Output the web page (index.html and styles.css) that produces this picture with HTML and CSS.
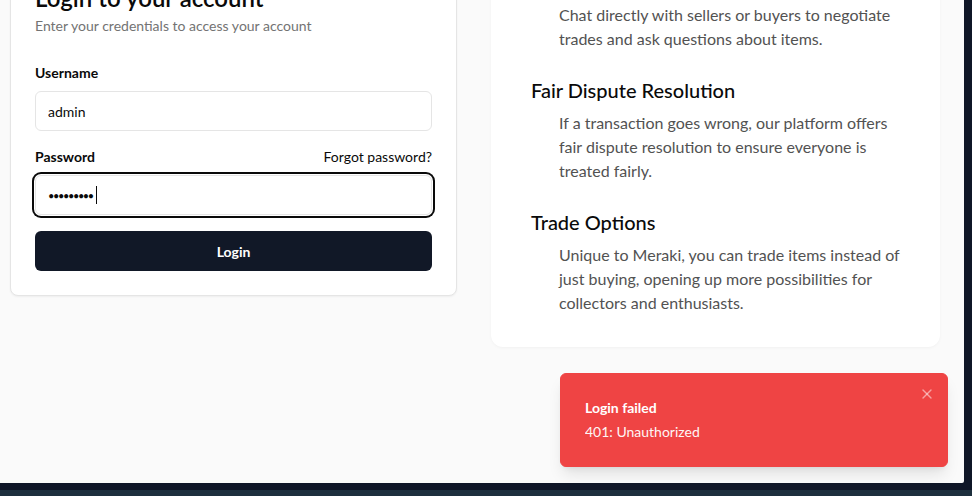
FILE: index.html
```html
<!DOCTYPE html>
<html lang="en">
<head>
<meta charset="utf-8">
<title>Login - Meraki</title>
<link rel="stylesheet" href="styles.css">
</head>
<body>
<div class="screen">
  <div class="window-row">
    <div class="page">
      <main class="layout">
        <div class="login-col">
          <section class="card login-card">
            <header class="card-header">
              <h1 class="card-title">Login to your account</h1>
              <p class="card-desc">Enter your credentials to access your account</p>
            </header>
            <form class="form">
              <div class="field">
                <label class="label" for="username">Username</label>
                <input class="input" id="username" type="text" value="admin">
              </div>
              <div class="field">
                <div class="label-row">
                  <label class="label" for="password">Password</label>
                  <a class="forgot" href="#">Forgot password?</a>
                </div>
                <div class="input input-focus"><span class="dots">•••••••••</span><span class="caret"></span></div>
              </div>
              <button class="btn" type="button">Login</button>
            </form>
          </section>
        </div>
        <section class="card features-card">
          <div class="feature">
            <h3 class="feature-title">Direct Messaging</h3>
            <p class="feature-desc">Chat directly with sellers or buyers to negotiate trades and ask questions about items.</p>
          </div>
          <div class="feature">
            <h3 class="feature-title">Fair Dispute Resolution</h3>
            <p class="feature-desc">If a transaction goes wrong, our platform offers fair dispute resolution to ensure everyone is treated fairly.</p>
          </div>
          <div class="feature">
            <h3 class="feature-title">Trade Options</h3>
            <p class="feature-desc">Unique to Meraki, you can trade items instead of just buying, opening up more possibilities for collectors and enthusiasts.</p>
          </div>
        </section>
      </main>
      <div class="toast" role="alert">
        <div class="toast-title">Login failed</div>
        <div class="toast-desc">401: Unauthorized</div>
        <button class="toast-close" type="button" aria-label="Close">
          <svg width="16" height="16" viewBox="0 0 24 24" fill="none" stroke="currentColor" stroke-width="2" stroke-linecap="round" stroke-linejoin="round"><path d="M18 6 6 18"/><path d="m6 6 12 12"/></svg>
        </button>
      </div>
    </div>
    <div class="edge"></div>
  </div>
  <div class="taskbar"><div class="taskbar-top"></div><div class="taskbar-bottom"></div></div>
</div>
</body>
</html>
```

FILE: styles.css
```css
* { box-sizing: border-box; }
html, body { margin: 0; padding: 0; }
body {
  font-family: "Lato", "Open Sans", sans-serif;
  color: #0a0a0a;
  background: #0f1627;
  overflow: hidden;
}
.screen {
  width: 972px;
  height: 496px;
  display: flex;
  flex-direction: column;
}
.window-row {
  display: flex;
  height: 483px;
}
.page {
  width: 964px;
  height: 483px;
  background: #fafafa;
  overflow: hidden;
  position: relative;
  border-bottom-right-radius: 2px;
}
.edge { flex: 1; background: #0f1627; }
.taskbar { flex: 1; display: flex; flex-direction: column; }
.taskbar-top { height: 7px; background: #0f1627; }
.taskbar-bottom { flex: 1; background: #1d2f3d; }

.layout {
  display: flex;
  align-items: flex-start;
  gap: 34px;
  padding-left: 10px;
  margin-top: -64px;
}
.login-col { padding-top: 25px; }
.card {
  background: #fff;
}
.login-card {
  width: 447px;
  border: 1px solid #e5e5e5;
  border-radius: 8px;
  box-shadow: 0 1px 2px rgba(0,0,0,0.05);
  padding: 24px;
}
.card-header { display: flex; flex-direction: column; gap: 6px; }
.card-title {
  margin: 0;
  font-size: 24px;
  line-height: 24px;
  font-weight: 600;
}
.card-desc {
  margin: 0;
  font-size: 14px;
  line-height: 20px;
  color: #737373;
}
.form {
  display: flex;
  flex-direction: column;
  gap: 16px;
  margin-top: 27px;
}
.field { display: flex; flex-direction: column; gap: 8px; }
.label-row { display: flex; justify-content: space-between; align-items: center; }
.label {
  font-size: 14px;
  line-height: 20px;
  font-weight: 700;
}
.forgot {
  font-size: 14px;
  line-height: 20px;
  color: #0a0a0a;
  text-decoration: none;
}
.input {
  display: flex;
  align-items: center;
  width: 100%;
  height: 40px;
  border: 1px solid #e5e5e5;
  border-radius: 6px;
  background: #fff;
  padding: 0 12px;
  font-family: inherit;
  font-size: 14px;
  color: #0a0a0a;
  outline: none;
}
.input-focus {
  box-shadow: 0 0 0 1px #fff, 0 0 0 3px #0a0a0a;
}
.dots { font-size: 11px; letter-spacing: -1.4px; }
.caret {
  display: inline-block;
  width: 1px;
  height: 18px;
  background: #0a0a0a;
  margin-left: 3px;
}
.btn {
  height: 40px;
  width: 100%;
  border: 0;
  border-radius: 6px;
  background: #111827;
  color: #fff;
  font-family: inherit;
  font-size: 14px;
  font-weight: 700;
}

.features-card {
  width: 449px;
  border-radius: 12px;
  box-shadow: 0 1px 3px rgba(0,0,0,0.04);
  padding: 32px 40px 32px 40px;
  display: flex;
  flex-direction: column;
  gap: 25px;
}
.feature { display: flex; flex-direction: column; gap: 7px; }
.feature-title {
  margin: 0;
  font-size: 20px;
  line-height: 28px;
  font-weight: 500;
}
.feature-desc {
  margin: 0;
  padding-left: 28px;
  font-size: 16px;
  line-height: 24px;
  color: #525252;
}

.toast {
  position: absolute;
  right: 16px;
  bottom: 16px;
  width: 388px;
  background: #ef4444;
  color: #fff;
  border: 1px solid #ef4444;
  border-radius: 6px;
  padding: 24px;
  display: flex;
  flex-direction: column;
  gap: 4px;
  box-shadow: 0 10px 15px -3px rgba(0,0,0,0.1), 0 4px 6px -4px rgba(0,0,0,0.1);
}
.toast-title { font-size: 14px; line-height: 20px; font-weight: 700; }
.toast-desc { font-size: 14px; line-height: 20px; opacity: 0.95; }
.toast-close {
  position: absolute;
  top: 8px;
  right: 8px;
  padding: 4px;
  border: 0;
  background: transparent;
  color: rgba(255,255,255,0.5);
  display: flex;
}
```
